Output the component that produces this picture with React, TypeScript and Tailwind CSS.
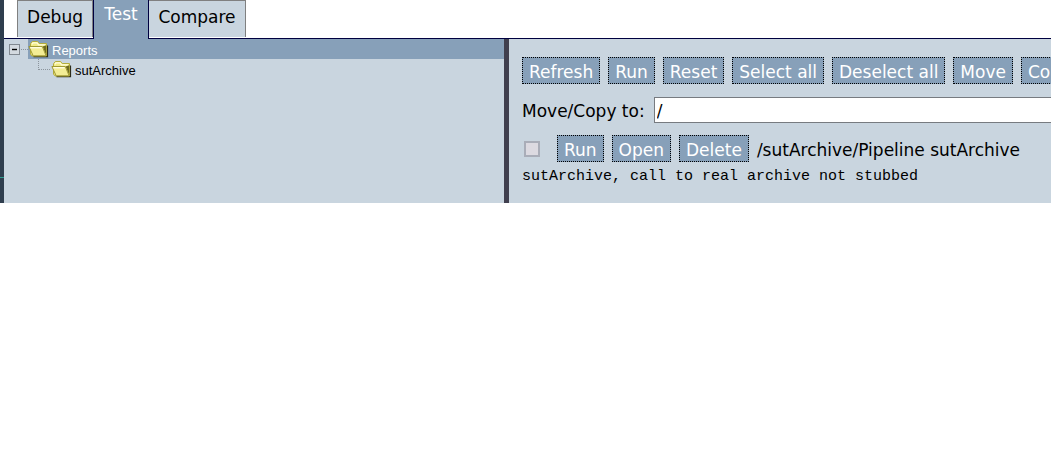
import React, { useState } from "react";

function Folder() {
  return (
    <svg width="21" height="18" viewBox="0 0 21 18" className="shrink-0" aria-hidden="true">
      <path d="M5.5 16.6h14V5.5" fill="none" stroke="#2c2b1a" strokeWidth="1.2" />
      <path d="M2.5 14V3.8L4.4 1.5h5.2l1.6 2h7.3v12.4H4z" fill="#f1eb86" stroke="#b3ac3c" strokeWidth="1" />
      <path d="M3.8 4.4L5 2.8h4l1.6 2h6.6" fill="none" stroke="#fffde0" strokeWidth="1.2" />
      <path d="M14.6 6.6l3.6-1.4v10z" fill="#6f6b20" />
      <path d="M.9 6.5h13.4l3.8 9.3H5.2z" fill="#f3ed95" stroke="#a09a35" strokeWidth="1" />
      <path d="M2.4 7.7h11.2" fill="none" stroke="#fffde0" strokeWidth="1.4" />
    </svg>
  );
}

function ActionButton({ children }: { children: React.ReactNode }) {
  return (
    <button
      type="button"
      className="h-[27px] shrink-0 whitespace-nowrap border border-dotted border-black bg-[#87a0b9] px-1.5 pt-0.5 leading-6 text-white"
    >
      {children}
    </button>
  );
}

const actions = ["Refresh", "Run", "Reset", "Select all", "Deselect all", "Move", "Copy"];
const rowActions = ["Run", "Open", "Delete"];

export default function App() {
  const [target, setTarget] = useState("/");
  return (
    <div className="flex overflow-hidden bg-white font-['Verdana','DejaVu_Sans',sans-serif] text-[17px] text-black">
      <div className="flex w-1 shrink-0 flex-col bg-[#2f3e4e]">
        <div className="h-[178px] border-b border-[#2f9c8e]" />
      </div>
      <div className="flex min-w-0 flex-1 flex-col">
        <nav className="flex h-[39px] border-b border-[#000040] pl-[13px]">
          <button type="button" className="h-[37px] w-[76px] border-x border-t border-[#808080] bg-[#c9d5df] pb-1 leading-6">
            Debug
          </button>
          <button type="button" className="-mb-px h-[39px] w-14 border-x border-[#000040] bg-[#87a0b9] pb-3 leading-6 text-white">
            Test
          </button>
          <button type="button" className="h-[37px] w-[97px] border-r border-t border-[#808080] bg-[#c9d5df] pb-1 leading-6">
            Compare
          </button>
        </nav>
        <div className="flex h-[164px] bg-[#c9d5df]">
          <aside className="w-[500px] shrink-0 font-['Liberation_Sans',Arial,sans-serif] text-[13px] leading-5">
            <div className="flex h-5 items-center pl-1">
              <button type="button" aria-label="Collapse Reports" className="shrink-0">
                <svg width="20" height="20" viewBox="0 0 20 20">
                  <rect x="1.5" y="5.5" width="10" height="10" fill="#d3dae0" stroke="#808890" />
                  <path d="M4 10.5h5" stroke="#000" strokeWidth="1.4" />
                  <path d="M13 10.5h7" stroke="#8b949c" strokeDasharray="1 1" />
                </svg>
              </button>
              <div className="flex h-5 flex-1 items-center gap-[3px] bg-[#87a0b9] text-white">
                <Folder />
                <span className="pt-1">Reports</span>
              </div>
            </div>
            <div className="flex h-5 items-center gap-[3px] pl-[34px]">
              <svg width="13" height="20" viewBox="0 0 13 20" className="-mr-[3px] shrink-0" aria-hidden="true">
                <path d="M.5 0v11M1 10.5h12" fill="none" stroke="#8b949c" strokeDasharray="1 1" />
              </svg>
              <Folder />
              <span className="pt-1">sutArchive</span>
            </div>
          </aside>
          <div className="w-[5px] shrink-0 bg-[#403f4e]" />
          <main className="flex min-w-0 flex-1 flex-col overflow-hidden pl-[13px] pt-[18px]">
            <div className="flex gap-2">
              {actions.map((a) => (
                <ActionButton key={a}>{a}</ActionButton>
              ))}
            </div>
            <div className="mt-[13px] flex h-[26px] items-center gap-[9px]">
              <label htmlFor="target" className="shrink-0 pt-1">Move/Copy to:</label>
              <input
                id="target"
                value={target}
                onChange={(e) => setTarget(e.target.value)}
                className="-mr-px h-[26px] min-w-0 flex-1 border border-[#777b80] bg-white px-0.5 pt-0.5 outline-none"
              />
            </div>
            <div className="mt-3 flex h-[27px] items-center gap-2">
              <input
                type="checkbox"
                aria-label="Select /sutArchive/Pipeline sutArchive"
                className="ml-0.5 mr-[9px] size-4 shrink-0 appearance-none border-2 border-[#a9adb8] bg-[#dcdae1] checked:bg-[#87a0b9]"
              />
              {rowActions.map((a) => (
                <ActionButton key={a}>{a}</ActionButton>
              ))}
              <span className="whitespace-nowrap pt-1">/sutArchive/Pipeline sutArchive</span>
            </div>
            <p className="mt-[5px] whitespace-nowrap font-['Liberation_Mono','Courier_New',monospace] text-[15px] leading-5">
              sutArchive, call to real archive not stubbed
            </p>
          </main>
        </div>
      </div>
    </div>
  );
}
